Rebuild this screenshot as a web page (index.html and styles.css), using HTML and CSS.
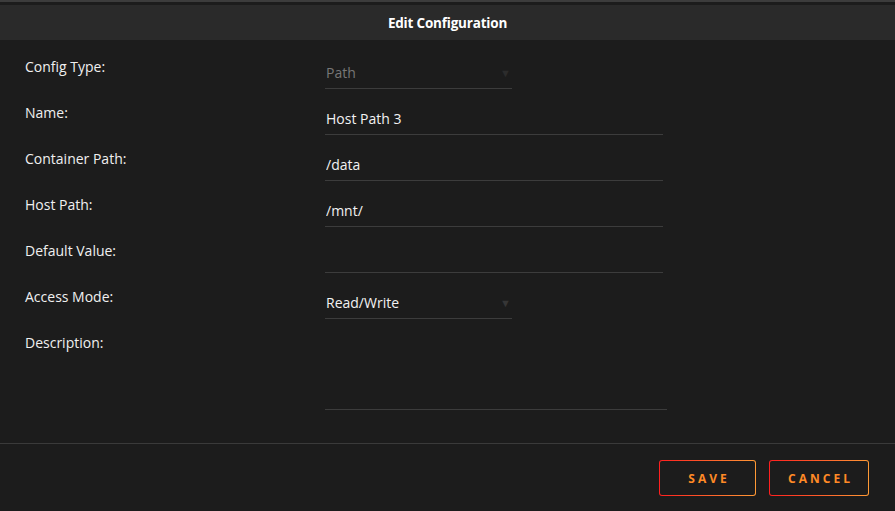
FILE: index.html
```html
<!DOCTYPE html>
<html lang="en">
<head>
  <meta charset="UTF-8" />
  <title>Edit Configuration</title>
  <link rel="stylesheet" href="styles.css">
</head>
<body>
<div class="dialog">
  <div class="title-bar">
    <h1>Edit Configuration</h1>
  </div>

  <form class="config-form">
    <div class="row">
      <label>Config Type:</label>
      <div class="select disabled">
        <span>Path</span>
        <span class="arrow">&#9660;</span>
      </div>
    </div>
    <div class="row">
      <label for="name">Name:</label>
      <input type="text" id="name" value="Host Path 3" />
    </div>
    <div class="row">
      <label for="target">Container Path:</label>
      <input type="text" id="target" value="/data" />
    </div>
    <div class="row">
      <label for="host">Host Path:</label>
      <input type="text" id="host" value="/mnt/" />
    </div>
    <div class="row">
      <label for="default">Default Value:</label>
      <input type="text" id="default" value="" />
    </div>
    <div class="row">
      <label>Access Mode:</label>
      <div class="select">
        <span>Read/Write</span>
        <span class="arrow">&#9660;</span>
      </div>
    </div>
    <div class="row">
      <label for="desc">Description:</label>
      <textarea id="desc"></textarea>
    </div>
  </form>

  <div class="actions">
    <button type="button" class="save">SAVE</button>
    <button type="button" class="cancel">CANCEL</button>
  </div>
</div>
</body>
</html>
```

FILE: styles.css
```css
* {
  box-sizing: border-box;
}
body {
  margin: 0;
  background: #1c1c1c;
  font-family: 'Open Sans', 'Noto Sans', sans-serif;
  color: #f2f2f2;
  font-size: 14px;
}

.dialog {
  border-top: 2px solid #3c3c3c;
  padding-top: 3px;
  height: 511px;
}

/* 標題列 */
.title-bar {
  background: #2a2a2a;
  height: 35px;
  display: flex;
  align-items: center;
  justify-content: center;
}
.title-bar h1 {
  margin: 0;
  font-size: 13.5px;
  font-weight: 700;
  color: #fff;
  letter-spacing: -0.2px;
}

/* 表單 */
.config-form {
  padding: 15px 0 33px 25px;
  border-bottom: 1px solid #3a3a3a;
}
.row {
  display: grid;
  grid-template-columns: 300px auto;
  align-items: start;
  min-height: 46px;
}
.row label {
  line-height: 24px;
  color: #f0f0f0;
}

.row input,
.select,
.row textarea {
  margin-top: 6px;
  background: transparent;
  border: none;
  border-bottom: 1px solid #3c3c3c;
  color: #f2f2f2;
  font-family: inherit;
  font-size: 14px;
  line-height: 24px;
  padding: 0 0 3px 1px;
  outline: none;
}
.row input {
  width: 338px;
  height: 28px;
  padding-bottom: 5px;
}
.select {
  width: 187px;
  height: 28px;
  display: flex;
  justify-content: space-between;
}
.select.disabled {
  color: #777;
}
.select .arrow {
  font-size: 11px;
  color: #363636;
  padding-right: 1px;
}
.select.disabled .arrow {
  color: #2c2c2c;
}
.row textarea {
  width: 342px;
  height: 73px;
  resize: none;
}

/* 按鈕 */
.actions {
  display: flex;
  justify-content: flex-end;
  gap: 13px;
  padding: 16px 26px 0 0;
}
.actions button {
  height: 36px;
  padding: 0 0 0 3px;
  background:
    linear-gradient(#1c1c1c, #1c1c1c) padding-box,
    linear-gradient(90deg, #ff1f1f, #ff9a35) border-box;
  border: 1.5px solid transparent;
  border-radius: 3px;
  color: #ff8a26;
  font-family: inherit;
  font-size: 12px;
  font-weight: 700;
  letter-spacing: 3px;
  cursor: pointer;
}
.actions .save {
  width: 97px;
}
.actions .cancel {
  width: 100px;
}
```
